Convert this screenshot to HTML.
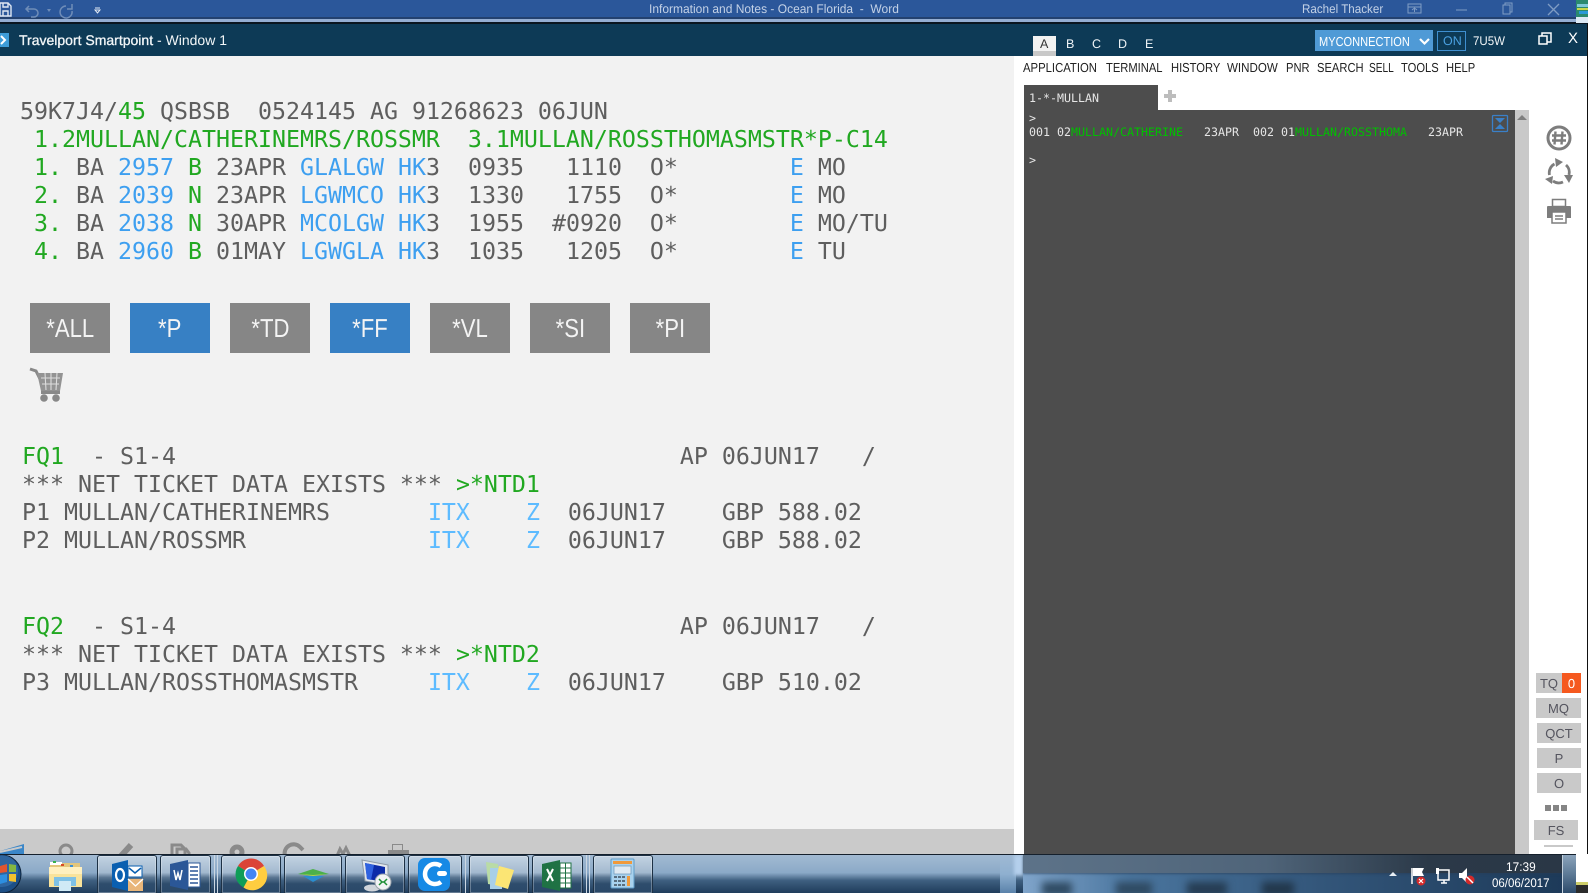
<!DOCTYPE html>
<html><head><meta charset="utf-8"><title>Travelport Smartpoint</title>
<style>
html,body{margin:0;padding:0;width:1588px;height:893px;overflow:hidden;background:#fff}
body{position:relative;font-family:"Liberation Sans",sans-serif;text-rendering:geometricPrecision}
.b{position:absolute}
.t{position:absolute;white-space:pre;transform-origin:0 50%;line-height:1}
.m{position:absolute;white-space:pre;font-family:"DejaVu Sans Mono",monospace;font-size:23.25px;line-height:28px;color:#5e5e5e;left:20px;height:28px;filter:blur(.3px)}
.g{color:#21a821}.c{color:#3d9ff0}.l{color:#5dbbff}
.k{position:absolute;white-space:pre;font-family:"DejaVu Sans Mono",monospace;font-size:11.63px;line-height:14px;color:#e6e6e6;left:1029px}
.k i{font-style:normal;color:#00c000}
.btn{position:absolute;top:303px;width:80px;height:50px;background:#868686;color:#f4f4f4;font-size:26px;line-height:51px;text-align:center;filter:blur(.2px)}
.btn span{display:inline-block;transform:scaleX(.85)}
.blue{background:#3780c4}
.sb{position:absolute;background:#c9c9c9;color:#55555f;font-size:13px;text-align:center;height:20px;line-height:21px}
.tb{position:absolute;top:855px;height:38px;box-sizing:border-box;border:1px solid #1d3145;border-bottom:0;border-radius:3px 3px 0 0;box-shadow:inset 0 0 0 1px rgba(255,255,255,.28);background:linear-gradient(#c3d3e2 0,#a3b9cf 45%,#5a7692 58%,#2e4d6d 75%,#2a4868 100%)}
svg{position:absolute;left:0;top:0;pointer-events:none}
</style></head><body>

<!-- Word title bar -->
<div class="b" style="left:0;top:0;width:1588px;height:17px;background:#2b579a"></div>
<div class="b" style="left:0;top:17px;width:1588px;height:2px;background:#23416f"></div>
<div class="b" style="left:0;top:19px;width:1588px;height:3px;background:#94aed3"></div>
<div class="b" style="left:0;top:22px;width:1588px;height:2px;background:#0a1520"></div>
<div class="t" style="left:649px;top:3px;font-size:12.5px;color:#c3d1e6;transform:scaleX(.96)">Information and Notes - Ocean Florida  -  Word</div>
<div class="t" style="left:1302px;top:3px;font-size:12.5px;color:#c3d1e6;transform:scaleX(.93)">Rachel Thacker</div>

<!-- Smartpoint header -->
<div class="b" style="left:0;top:24px;width:1587px;height:32px;background:#0d3a56"></div>
<div class="t" style="left:19px;top:33px;font-size:14px;color:#f2f6f8"><span style="-webkit-text-stroke:.3px #f2f6f8">Travelport Smartpoint</span> - Window 1</div>
<div class="b" style="left:1033px;top:36px;width:23px;height:15px;background:#f2f2f2"></div>
<div class="b" style="left:1033px;top:51px;width:23px;height:5px;background:#c8c8c8"></div>
<div class="t" style="left:1040px;top:38px;font-size:12.5px;color:#333">A</div>
<div class="t" style="left:1066px;top:38px;font-size:12.5px;color:#eef3f6">B</div>
<div class="t" style="left:1092px;top:38px;font-size:12.5px;color:#eef3f6">C</div>
<div class="t" style="left:1118px;top:38px;font-size:12.5px;color:#eef3f6">D</div>
<div class="t" style="left:1145px;top:38px;font-size:12.5px;color:#eef3f6">E</div>
<div class="b" style="left:1315px;top:30px;width:118px;height:21px;background:#4f9ad6"></div>
<div class="t" style="left:1319px;top:35px;font-size:13px;color:#fff;transform:scaleX(.85)">MYCONNECTION</div>
<div class="b" style="left:1437px;top:31px;width:27px;height:18px;border:1px solid #3f8fd0"></div>
<div class="t" style="left:1443px;top:35px;font-size:12.5px;color:#4aa0e0">ON</div>
<div class="t" style="left:1473px;top:35px;font-size:12.5px;color:#f0f4f6;transform:scaleX(.92)">7U5W</div>
<div class="t" style="left:1568px;top:31px;font-size:15px;color:#fff">X</div>

<!-- Left panel -->
<div class="b" style="left:0;top:56px;width:1014px;height:773px;background:#f2f2f2"></div>
<div class="b" style="left:0;top:829px;width:1014px;height:25px;background:#cacaca"></div>
<div class="b" style="left:1014px;top:56px;width:573px;height:798px;background:#fff"></div>
<div class="b" style="left:1587px;top:24px;width:1px;height:830px;background:#111"></div>

<div class="m" style="top:98px">59K7J4/<span class="g">45</span> QSBSB  0524145 AG 91268623 06JUN</div>
<div class="m g" style="top:126px"> 1.2MULLAN/CATHERINEMRS/ROSSMR  3.1MULLAN/ROSSTHOMASMSTR*P-C14</div>
<div class="m" style="top:154px"> <span class="g">1.</span> BA <span class="c">2957</span> <span class="g">B</span> 23APR <span class="c">GLALGW HK</span>3  0935   1110  O*        <span class="c">E</span> MO</div>
<div class="m" style="top:182px"> <span class="g">2.</span> BA <span class="c">2039</span> <span class="g">N</span> 23APR <span class="c">LGWMCO HK</span>3  1330   1755  O*        <span class="c">E</span> MO</div>
<div class="m" style="top:210px"> <span class="g">3.</span> BA <span class="c">2038</span> <span class="g">N</span> 30APR <span class="c">MCOLGW HK</span>3  1955  #0920  O*        <span class="c">E</span> MO/TU</div>
<div class="m" style="top:238px"> <span class="g">4.</span> BA <span class="c">2960</span> <span class="g">B</span> 01MAY <span class="c">LGWGLA HK</span>3  1035   1205  O*        <span class="c">E</span> TU</div>

<div class="btn" style="left:30px"><span>*ALL</span></div>
<div class="btn blue" style="left:130px"><span>*P</span></div>
<div class="btn" style="left:230px"><span>*TD</span></div>
<div class="btn blue" style="left:330px"><span>*FF</span></div>
<div class="btn" style="left:430px"><span>*VL</span></div>
<div class="btn" style="left:530px"><span>*SI</span></div>
<div class="btn" style="left:630px"><span>*PI</span></div>

<div class="m" style="left:22px;top:443px"><span class="g">FQ1</span>  - S1-4                                    AP 06JUN17   /</div>
<div class="m" style="left:22px;top:471px">*** NET TICKET DATA EXISTS *** <span class="g">&gt;*NTD1</span></div>
<div class="m" style="left:22px;top:499px">P1 MULLAN/CATHERINEMRS       <span class="l">ITX</span>    <span class="l">Z</span>  06JUN17    GBP 588.02</div>
<div class="m" style="left:22px;top:527px">P2 MULLAN/ROSSMR             <span class="l">ITX</span>    <span class="l">Z</span>  06JUN17    GBP 588.02</div>
<div class="m" style="left:22px;top:613px"><span class="g">FQ2</span>  - S1-4                                    AP 06JUN17   /</div>
<div class="m" style="left:22px;top:641px">*** NET TICKET DATA EXISTS *** <span class="g">&gt;*NTD2</span></div>
<div class="m" style="left:22px;top:669px">P3 MULLAN/ROSSTHOMASMSTR     <span class="l">ITX</span>    <span class="l">Z</span>  06JUN17    GBP 510.02</div>

<!-- Menu -->
<div class="t" style="left:1023px;top:61px;font-size:13px;color:#222;transform:scaleX(.87)">APPLICATION</div>
<div class="t" style="left:1106px;top:61px;font-size:13px;color:#222;transform:scaleX(.86)">TERMINAL</div>
<div class="t" style="left:1171px;top:61px;font-size:13px;color:#222;transform:scaleX(.86)">HISTORY</div>
<div class="t" style="left:1227px;top:61px;font-size:13px;color:#222;transform:scaleX(.89)">WINDOW</div>
<div class="t" style="left:1286px;top:61px;font-size:13px;color:#222;transform:scaleX(.86)">PNR</div>
<div class="t" style="left:1317px;top:61px;font-size:13px;color:#222;transform:scaleX(.86)">SEARCH</div>
<div class="t" style="left:1369px;top:61px;font-size:13px;color:#222;transform:scaleX(.78)">SELL</div>
<div class="t" style="left:1401px;top:61px;font-size:13px;color:#222;transform:scaleX(.86)">TOOLS</div>
<div class="t" style="left:1446px;top:61px;font-size:13px;color:#222;transform:scaleX(.86)">HELP</div>

<!-- Terminal -->
<div class="b" style="left:1024px;top:85px;width:134px;height:25px;background:#4d4d4d"></div>
<div class="b" style="left:1024px;top:110px;width:491px;height:744px;background:#4d4d4d"></div>
<div class="b" style="left:1515px;top:110px;width:14px;height:744px;background:#c9c9c9"></div>
<div class="k" style="top:91px">1-*-MULLAN</div>
<div class="k" style="top:111px">&gt;</div>
<div class="k" style="top:125px">001 02<i>MULLAN/CATHERINE</i>   23APR  002 01<i>MULLAN/ROSSTHOMA</i>   23APR</div>
<div class="k" style="top:153px">&gt;</div>

<!-- Side buttons -->
<div class="sb" style="left:1536px;top:673px;width:26px">TQ</div>
<div class="sb" style="left:1562px;top:673px;width:19px;background:#f5591f;color:#fff">0</div>
<div class="sb" style="left:1536px;top:698px;width:45px">MQ</div>
<div class="sb" style="left:1537px;top:723px;width:44px">QCT</div>
<div class="sb" style="left:1537px;top:748px;width:44px">P</div>
<div class="sb" style="left:1537px;top:773px;width:44px">O</div>
<div class="b" style="left:1545px;top:805px;width:6px;height:6px;background:#858585"></div>
<div class="b" style="left:1553px;top:805px;width:6px;height:6px;background:#858585"></div>
<div class="b" style="left:1561px;top:805px;width:6px;height:6px;background:#858585"></div>
<div class="sb" style="left:1534px;top:820px;width:44px">FS</div>
<div class="b" style="left:1544px;top:845px;width:29px;height:2px;background:#c9c9c9"></div>

<!-- Icons behind taskbar -->
<svg width="1588" height="893" viewBox="0 0 1588 893">
  <g fill="none" stroke="#8a8a8a" stroke-width="3">
    <circle cx="66" cy="851" r="6"/>
    <path d="M121 856l10-11" stroke-width="6"/>
    <path d="M172 856v-11h9l4 4v7M177 856v-7h9l3 4v3"/>
    <circle cx="237" cy="852" r="5" stroke-width="5"/>
    <path d="M285 856a9 9 0 0 1 15-9l3 3" stroke-width="4"/>
    <path d="M337 856l3-7 3 5 3-6 4 8" stroke-width="3"/>
  </g>
  <path d="M0 851l24-7v11H0z" fill="#3a86c8"/>
  <path d="M0 852l22-5" stroke="#cacaca" stroke-width="2"/>
  <path d="M392 844h11v6h-11zM388 850h21v5h-21z" fill="#8a8a8a"/>
  <path d="M393 845h9v5h-9z" fill="#cacaca"/>
</svg>

<!-- Taskbar -->
<div class="b" style="left:0;top:854px;width:1576px;height:39px;background:linear-gradient(#a3bbd3 0,#8ba9c7 48%,#3e5f80 68%,#1f3c5b 100%)"></div>
<div class="b" style="left:0;top:854px;width:1576px;height:1px;background:#15202c"></div>
<div class="b" style="left:1000px;top:855px;width:576px;height:38px;overflow:hidden">
  <div class="b" style="left:0;top:0;width:16px;height:38px;background:linear-gradient(#9fb9d4,#8fb0d0 50%,#5a82aa)"></div>
  <div class="b" style="left:14px;top:0;width:9px;height:20px;background:#b4cfec;filter:blur(1.5px)"></div>
  <div class="b" style="left:23px;top:18px;width:540px;height:20px;background:linear-gradient(90deg,#7fa4ca,#4a759e 20%,#33567a 55%,#1d3a59)"></div>
  <div class="b" style="left:42px;top:27px;width:30px;height:14px;background:#2f4a62;filter:blur(4px)"></div>
  <div class="b" style="left:116px;top:27px;width:36px;height:14px;background:#2f4a62;filter:blur(4px)"></div>
  <div class="b" style="left:187px;top:27px;width:40px;height:14px;background:#253c52;filter:blur(4px)"></div>
  <div class="b" style="left:262px;top:27px;width:32px;height:14px;background:#22374b;filter:blur(4px)"></div>
  <div class="b" style="left:23px;top:0;width:540px;height:18px;background:linear-gradient(90deg,#5d7389,#4f6479 45%,#2b3948 75%,#2a3746);box-shadow:0 1px 2px rgba(40,60,85,.6)"></div>
</div>
<div class="b" style="left:1562px;top:855px;width:14px;height:38px;background:linear-gradient(#8ba3bb,#5d7a96 50%,#2d4b6b);border-left:1px solid #c4d1dd;box-sizing:border-box"></div>
<div class="b" style="left:1576px;top:882px;width:12px;height:11px;background:#2b2b2b"></div>
<div class="b" style="left:1576px;top:882px;width:12px;height:3px;background:#cfcf6a"></div>

<div class="tb" style="left:97px;width:60px"></div>
<div class="tb" style="left:160px;width:51px"></div>
<div class="b" style="left:214px;top:855px;width:1px;height:38px;background:#cbd7e3"></div>
<div class="b" style="left:217px;top:855px;width:1px;height:38px;background:#cbd7e3"></div>
<div class="tb" style="left:221px;width:60px"></div>
<div class="tb" style="left:284px;width:58px"></div>
<div class="tb" style="left:345px;width:60px"></div>
<div class="tb" style="left:408px;width:54px"></div>
<div class="b" style="left:465px;top:855px;width:1px;height:38px;background:#cbd7e3"></div>
<div class="tb" style="left:469px;width:60px"></div>
<div class="tb" style="left:532px;width:51px"></div>
<div class="b" style="left:586px;top:855px;width:1px;height:38px;background:#cbd7e3"></div>
<div class="b" style="left:589px;top:855px;width:1px;height:38px;background:#cbd7e3"></div>
<div class="tb" style="left:593px;width:60px"></div>

<div class="t" style="left:1506px;top:861px;font-size:12.5px;color:#fff;transform:scaleX(.95)">17:39</div>
<div class="t" style="left:1492px;top:877px;font-size:12.5px;color:#fff;transform:scaleX(.92)">06/06/2017</div>

<svg width="1588" height="893" viewBox="0 0 1588 893">
  <!-- title bar -->
  <g fill="none" stroke="#dfe7f2" stroke-width="1.4">
    <path d="M0 3h8l3 3v10H0z"/><path d="M3 3v4h5V3M3 16v-5h5v5"/>
  </g>
  <g fill="none" stroke="#6f8db8" stroke-width="1.5">
    <path d="M29 6l-3 3 3 3M26 9h8a4 4 0 0 1 0 8h-3"/>
    <path d="M66 6a6 6 0 1 0 6 5M72 4v5h-5"/>
  </g>
  <path d="M47 9h4l-2 3z" fill="#6f8db8"/>
  <path d="M95 8h5M95 10h5l-2.500 3z" fill="none" stroke="#e6ecf5" stroke-width="1"/>
  <g fill="none" stroke="#7f9cc4" stroke-width="1">
    <rect x="1408" y="4" width="13" height="9"/><path d="M1408 7h13M1414.500 12V8M1412 10l2.500-2 2.500 2"/>
    <path d="M1456 10h11"/>
    <rect x="1503" y="5" width="7" height="9"/><path d="M1505 5V3h7v9h-2"/>
    <path d="M1548 4l11 11M1559 4l-11 11" stroke-width="1.300"/>
  </g>
  <rect x="1576" y="0" width="12" height="17" fill="#2a8a6f"/>
  <path d="M1577 4h11v3h-11z" fill="#7fc9d8"/><path d="M1577 8h11v2h-11z" fill="#c9d84a"/><path d="M1579 11h9v3h-9z" fill="#2a9ad8"/>
  <rect x="1576" y="17" width="12" height="6" fill="#dce9f5"/>
  <!-- smartpoint logo -->
  <path d="M0 33h9v14H0z" fill="#3d9cd8"/><path d="M1 36l4 4-4 4" fill="none" stroke="#fff" stroke-width="2"/>
  <!-- dropdown chevron -->
  <path d="M1420 39l4.500 4.500 4.500-4.500" fill="none" stroke="#fff" stroke-width="2.200"/>
  <!-- restore -->
  <g fill="none" stroke="#fff" stroke-width="1.500">
    <rect x="1539" y="36" width="8" height="8"/><path d="M1542 36v-3h9v9h-4"/>
  </g>
  <!-- plus -->
  <path d="M1170 90v12M1164 96h12" stroke="#bdbdbd" stroke-width="4"/>
  <!-- hourglass -->
  <rect x="1492.500" y="115.500" width="15" height="16" rx="1" fill="none" stroke="#3a80c8" stroke-width="1.300"/>
  <path d="M1495 118h10l-5 5zM1495 129h10l-5-5z" fill="#3a80c8"/>
  <path d="M1522 115l5 5h-10z" fill="#7f7f7f"/>
  <!-- # icon -->
  <circle cx="1559" cy="138" r="11" fill="none" stroke="#7d7d7d" stroke-width="3"/>
  <path d="M1555.500 131.500l-1 13M1562.500 131.500l-1 13M1552 135.500h14M1552 140.500h14" stroke="#7d7d7d" stroke-width="2.400"/>
  <!-- refresh -->
  <g fill="none" stroke="#7d7d7d" stroke-width="2.800">
    <path d="M1549.500 175a10 10 0 0 1 5-11"/><path d="M1566 165a10 10 0 0 1 3 10"/><path d="M1563 182a10 10 0 0 1-10-1"/>
  </g>
  <path d="M1555 158l8 4-7 5zM1564 175l9 0-4 8zM1553 176l-1 8-7-5z" fill="#7d7d7d"/>
  <!-- printer -->
  <path d="M1552.500 199.500h13v7h-13z" fill="none" stroke="#7d7d7d" stroke-width="1.500"/>
  <path d="M1547 207q0-1 1-1h22q1 0 1 1v11h-24z" fill="#7d7d7d"/>
  <rect x="1552" y="212" width="14" height="11" fill="#fff" stroke="#7d7d7d" stroke-width="1.500"/>
  <path d="M1555 216h8M1555 219h8" stroke="#7d7d7d" stroke-width="1.500"/>
  <!-- cart -->
  <path d="M30 369l6 2 4 8" fill="none" stroke="#888" stroke-width="3"/>
  <path d="M37 373h26l-3 18H41z" fill="#939393"/>
  <path d="M41 378h19M42 384h17M45 373l1 17M51 373v17M57 373l-1 17" stroke="#dcdcdc" stroke-width="1.100"/>
  <path d="M41 391h19v3H41z" fill="#888"/>
  <circle cx="44" cy="398" r="3.800" fill="#888"/><circle cx="56" cy="398" r="3.800" fill="#888"/>

  <!-- start orb -->
  <circle cx="2" cy="874" r="19" fill="#1d4f86" stroke="#0e2238" stroke-width="1"/>
  <circle cx="2" cy="871" r="16" fill="#3c79b4" opacity=".55"/>
  <path d="M0 866l7-2v8l-7 1z" fill="#e0552f"/><path d="M9 864l7 1v7l-7 0z" fill="#84b741"/>
  <path d="M0 875l7-1v8l-7 2z" fill="#2d8fe0"/><path d="M9 874h7v8l-7-1z" fill="#f2c12e"/>

  <!-- explorer -->
  <path d="M50 863h30v5H50z" fill="#e3c67c"/><path d="M50 862h12v3H50z" fill="#fff"/>
  <rect x="53" y="861" width="3" height="2" fill="#36b24a"/><rect x="61" y="864" width="3" height="2" fill="#d84a2a"/><rect x="70" y="865" width="3" height="2" fill="#3a90d8"/>
  <path d="M49 867h33v20H49z" fill="#f9e39b"/><path d="M49 867h33v7H49z" fill="#fff0bf"/>
  <path d="M54 877h22v9h-5v5H59v-5h-5z" fill="#7fc1e5"/><path d="M59 881h12v10H59z" fill="#cfeaf6"/>

  <!-- outlook -->
  <path d="M112 864l16-4v31l-16-4z" fill="#0a5fb0"/>
  <rect x="128" y="866" width="14" height="11" fill="#fff" stroke="#0a5fb0"/><path d="M129 868l6 5 6-5" fill="none" stroke="#0a5fb0" stroke-width="1.500"/>
  <path d="M128 879h15v12h-15z" fill="#e9b67a"/><path d="M128 879l7.500 7 7.500-7" fill="none" stroke="#fff" stroke-width="1.300"/>
  <ellipse cx="120" cy="875" rx="4" ry="6" fill="none" stroke="#fff" stroke-width="2.200"/>

  <!-- word -->
  <path d="M170 864l18-4v30l-18-4z" fill="#2b5797"/>
  <rect x="188" y="863" width="12" height="24" fill="#fff" stroke="#2b5797"/>
  <path d="M190 867h8M190 871h8M190 875h8M190 879h8M190 883h8" stroke="#2b5797" stroke-width="1.400"/>
  <path d="M174 870l2 10 2-7 2 7 2-10" fill="none" stroke="#fff" stroke-width="1.500"/>

  <!-- chrome -->
  <path d="M251 874L238 866a15 15 0 0 1 26 0z" fill="#db4437"/>
  <path d="M251 874l-7.500 13.500A15 15 0 0 1 238 866z" fill="#0f9d58"/>
  <path d="M251 874l13-8a15 15 0 0 1-20.500 21.500z" fill="#ffcd40"/>
  <circle cx="251" cy="874" r="7" fill="#fff"/><circle cx="251" cy="874" r="5.500" fill="#4285f4"/>

  <!-- teal app -->
  <path d="M298 874l15-5 16 5-16 2z" fill="#4cb04a"/>
  <path d="M300 874l13 2 14-2-14 1z" fill="#b5d84a"/>
  <path d="M303 876h21l-11 6z" fill="#2a8ed0"/>

  <!-- remote desktop -->
  <path d="M362 860l26 5v20l-23-4z" fill="#e2e7ee" stroke="#8d99a6"/>
  <path d="M365 863l20 4v15l-18-3z" fill="#0b2ba8"/><path d="M365 863l9 2-3 15-4-1z" fill="#2f62e0"/>
  <ellipse cx="372" cy="888" rx="8" ry="3.500" fill="#cfd4da"/>
  <circle cx="383" cy="882" r="8" fill="#f2f3f4" stroke="#99a2ab"/>
  <path d="M379 885l3-3-3-3M387 879l-3 3 3 3M382 882h2" stroke="#1f8f35" stroke-width="1.500" fill="none"/>

  <!-- G app -->
  <rect x="418" y="858" width="32" height="33" rx="7" fill="#1689e5"/>
  <path d="M441 866a10 10 0 1 0 0 16" fill="none" stroke="#fff" stroke-width="4.500"/>
  <rect x="437" y="871" width="10" height="5" rx="2.500" fill="#fff"/>

  <!-- sticky notes -->
  <path d="M486 862l12 2 2 22-12-2z" fill="#b9dba6"/>
  <rect x="490" y="868" width="12" height="21" fill="#a8cfe8"/>
  <path d="M499 866l15 4-6 19-13-4z" fill="#fbe574"/>

  <!-- excel -->
  <path d="M542 864l18-4v31l-18-4z" fill="#1f7244"/>
  <rect x="560" y="863" width="11" height="25" fill="#fff" stroke="#1f7244"/>
  <path d="M560 868h11M560 873h11M560 878h11M560 883h11M565.500 863v25" stroke="#1f7244" stroke-width="1"/>
  <path d="M547 869l6 12M553 869l-6 12" stroke="#fff" stroke-width="2"/>

  <!-- calculator -->
  <rect x="611" y="859" width="23" height="29" rx="1" fill="#a9d2ee" stroke="#5f9cc8"/>
  <rect x="613" y="861" width="19" height="3" fill="#f09a3c"/>
  <rect x="614" y="866" width="17" height="8" fill="#dfeaf3" stroke="#6c95b5" stroke-width=".7"/>
  <g fill="#5a6f80">
    <rect x="614" y="876" width="3" height="2"/><rect x="618" y="876" width="3" height="2"/><rect x="622" y="876" width="3" height="2"/>
    <rect x="614" y="880" width="3" height="2"/><rect x="618" y="880" width="3" height="2"/><rect x="622" y="880" width="3" height="2"/>
    <rect x="614" y="884" width="3" height="2"/><rect x="618" y="884" width="3" height="2"/><rect x="622" y="884" width="3" height="2"/>
  </g>
  <rect x="627" y="876" width="3" height="10" fill="#f09a3c"/>

  <!-- tray -->
  <path d="M1393 872l4 4h-8z" fill="#e8eef4"/>
  <path d="M1412 868v16" stroke="#fff" stroke-width="1.500"/><path d="M1413 868h11l-2 4 2 4h-11z" fill="#fff"/>
  <circle cx="1421" cy="881" r="4.500" fill="#d42a2a"/><path d="M1419 879l4 4M1423 879l-4 4" stroke="#fff" stroke-width="1.200"/>
  <rect x="1438" y="870" width="11" height="10" fill="none" stroke="#fff" stroke-width="1.500"/>
  <path d="M1441 883h6M1444 880v3" stroke="#fff" stroke-width="1.500"/><path d="M1436 868h3v6h-3z" fill="#fff"/>
  <path d="M1459 873h3l5-5v15l-5-5h-3z" fill="#fff"/>
  <circle cx="1470" cy="880" r="4.500" fill="#d42a2a"/><path d="M1467 877l6 6" stroke="#fff" stroke-width="1.500"/>
</svg>
</body></html>
